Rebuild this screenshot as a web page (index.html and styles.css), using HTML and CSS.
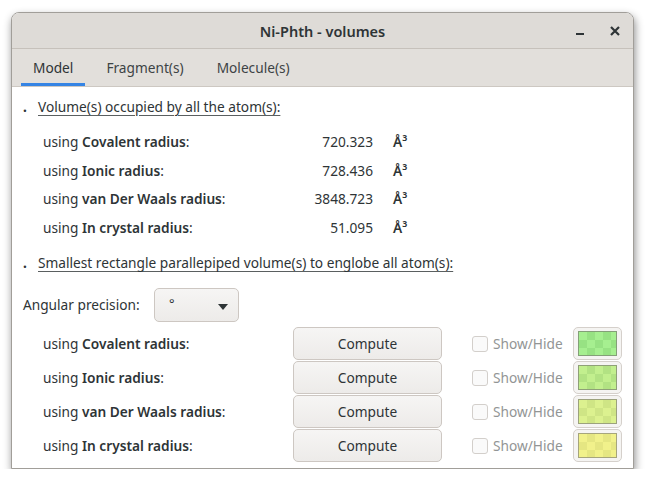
FILE: index.html
```html
<!DOCTYPE html>
<html>
<head>
<meta charset="utf-8">
<link rel="stylesheet" href="styles.css">
</head>
<body>
<div class="window">
  <header class="titlebar">
    <div class="title">Ni-Phth - volumes</div>
    <div class="controls">
      <span class="btn-min"></span>
      <svg class="btn-close" width="10" height="10" viewBox="0 0 10 10"><path d="M1 1L9 9M9 1L1 9" stroke="#2e3436" stroke-width="2.2" stroke-linecap="butt"/></svg>
    </div>
  </header>
  <nav class="tabs">
    <div class="tab active">Model</div>
    <div class="tab">Fragment(s)</div>
    <div class="tab">Molecule(s)</div>
  </nav>
  <main class="content">
    <div class="section"><span class="dot">.</span><span class="heading">Volume(s) occupied by all the atom(s):</span></div>
    <div class="vol-grid">
      <div class="label">using <b>Covalent radius</b>:</div><div class="value">720.323</div><div class="unit">Å³</div>
      <div class="label">using <b>Ionic radius</b>:</div><div class="value">728.436</div><div class="unit">Å³</div>
      <div class="label">using <b>van Der Waals radius</b>:</div><div class="value">3848.723</div><div class="unit">Å³</div>
      <div class="label">using <b>In crystal radius</b>:</div><div class="value">51.095</div><div class="unit">Å³</div>
    </div>
    <div class="section"><span class="dot">.</span><span class="heading">Smallest rectangle parallepiped volume(s) to englobe all atom(s):</span></div>
    <div class="precision">
      <span class="prec-label">Angular precision:</span>
      <div class="combo"><span class="deg">°</span><svg class="arrow" width="10" height="6" viewBox="0 0 10 6"><path d="M0 0H10L5 6Z" fill="#2e3436"/></svg></div>
    </div>
    <div class="box-grid">
      <div class="label">using <b>Covalent radius</b>:</div>
      <div class="button">Compute</div>
      <label class="check"><span class="box"></span>Show/Hide</label>
      <div class="color-btn"><span class="swatch sw1"></span></div>

      <div class="label">using <b>Ionic radius</b>:</div>
      <div class="button">Compute</div>
      <label class="check"><span class="box"></span>Show/Hide</label>
      <div class="color-btn"><span class="swatch sw2"></span></div>

      <div class="label">using <b>van Der Waals radius</b>:</div>
      <div class="button">Compute</div>
      <label class="check"><span class="box"></span>Show/Hide</label>
      <div class="color-btn"><span class="swatch sw3"></span></div>

      <div class="label">using <b>In crystal radius</b>:</div>
      <div class="button">Compute</div>
      <label class="check"><span class="box"></span>Show/Hide</label>
      <div class="color-btn"><span class="swatch sw4"></span></div>
    </div>
  </main>
</div>
</body>
</html>
```

FILE: styles.css
```css
* { box-sizing: border-box; }
html, body { margin: 0; padding: 0; background: #ffffff; }
body {
  font-family: "Noto Sans", "DejaVu Sans", sans-serif;
  font-size: 13.7px;
  color: #2e3436;
  padding: 12px 0 0 11px;
}
b { font-weight: 600; }
.window {
  width: 623px;
  height: 457px;
  border: 1px solid #a19e99;
  border-radius: 8px 8px 0 0;
  background: #ffffff;
  box-shadow: 1px 4px 9px rgba(0,0,0,0.45);
  display: flex;
  flex-direction: column;
  overflow: hidden;
}
.titlebar {
  height: 36px;
  flex: none;
  background: #dedbd7;
  border-bottom: 1px solid #c6c1bb;
  display: flex;
  align-items: center;
  justify-content: center;
  position: relative;
}
.title {
  font-weight: 600;
  font-size: 14.5px;
  color: #2e3436;
}
.controls {
  position: absolute;
  right: 13px;
  top: 0;
  height: 100%;
  display: flex;
  align-items: center;
  gap: 26px;
}
.btn-min {
  width: 8px;
  height: 2px;
  background: #2e3436;
  margin-top: 7px;
}
.tabs {
  height: 38px;
  flex: none;
  background: #e2dfdb;
  border-bottom: 1px solid #cdc8c2;
  display: flex;
  padding-left: 9px;
  gap: 9px;
}
.tab {
  height: 100%;
  padding: 2px 12px 0;
  display: flex;
  align-items: center;
  color: #3d4345;
  border-bottom: 3px solid transparent;
}
.tab.active { border-bottom-color: #3584e4; color: #2e3436; }
.content {
  flex: 1;
  padding: 5px 0 0 0;
  background: #fff;
}
.section {
  height: 28px;
  display: flex;
  align-items: center;
  padding-left: 11px;
}
.dot { width: 15px; font-weight: bold; }
.heading { text-decoration: underline; text-underline-offset: 3px; text-decoration-color: #5a5f60; }
.vol-grid {
  display: grid;
  grid-template-columns: 210px 100px auto;
  column-gap: 20px;
  grid-auto-rows: 28.7px;
  align-items: center;
  padding: 7.2px 0 6.6px 31px;
}
.value { text-align: right; }
.unit { font-weight: 600; }
.precision {
  display: flex;
  align-items: center;
  height: 34px;
  margin-top: 11px;
  padding-left: 11px;
}
.prec-label { width: 131px; }
.combo {
  width: 85px;
  height: 34px;
  border: 1px solid #cdc7c2;
  border-radius: 5px;
  background: linear-gradient(#f6f5f4, #edebe9);
  display: flex;
  align-items: flex-start;
  justify-content: space-between;
  padding: 5px 10px 0 14px;
}
.deg { font-size: 13px; }
.arrow { margin-top: 10px; }
.box-grid {
  display: grid;
  grid-template-columns: 250px 149px 131px 49px;
  grid-auto-rows: 34px;
  align-items: center;
  margin-top: 5px;
  padding-left: 31px;
}
.box-grid > * { height: 33px; }
.box-grid > .label { line-height: 33px; }
.button {
  border: 1px solid #cdc7c2;
  border-radius: 5px;
  background: linear-gradient(#f6f5f4, #edebe9);
  display: flex;
  align-items: center;
  justify-content: center;
  color: #2e3436;
}
.check {
  display: flex;
  align-items: center;
  color: #929595;
  gap: 5px;
  padding-left: 30px;
}
.box {
  flex: none;
  width: 16px;
  height: 16px;
  border: 1px solid #d3cfcb;
  border-radius: 3px;
  background: #fafafa;
}
.color-btn {
  border: 1px solid #d5d0cb;
  border-radius: 5px;
  background: #f5f4f2;
  padding: 3px 4px;
  display: flex;
}
.swatch {
  flex: 1;
  border: 1px solid #8f9a86;
  background-size: 16px 16px;
}
.sw1 { background-image: repeating-conic-gradient(#97e283 0 25%, #a6ef90 0 50%); border-color: #84a078; }
.sw2 { background-image: repeating-conic-gradient(#b2e283 0 25%, #c2ef8e 0 50%); border-color: #8fa078; }
.sw3 { background-image: repeating-conic-gradient(#cfe585 0 25%, #dcf18f 0 50%); border-color: #9ca27c; }
.sw4 { background-image: repeating-conic-gradient(#e5e682 0 25%, #f1f18b 0 50%); border-color: #a6a57c; }
```
